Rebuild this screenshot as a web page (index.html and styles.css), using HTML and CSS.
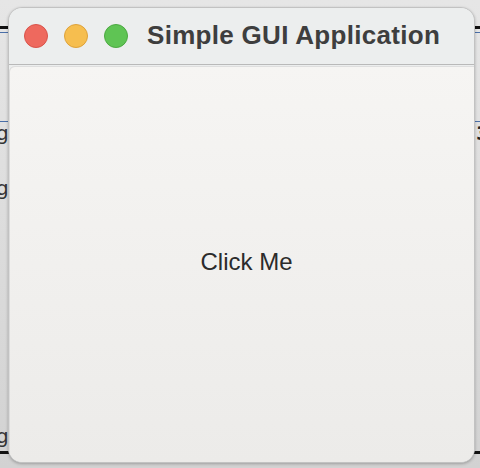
FILE: index.html
```html
<!DOCTYPE html>
<html>
<head>
<meta charset="utf-8">
<link rel="stylesheet" href="styles.css">
</head>
<body>
<div class="desktop">
  <div class="bg-line bg-line-black l"></div>
  <div class="bg-line bg-line-blue l"></div>
  <div class="bg-line bg-line-black r"></div>
  <div class="bg-line bg-line-blue r"></div>
  <div class="bg-line bg-line-blue l2"></div>
  <div class="bg-line bg-line-blue r2"></div>
  <span class="bg-glyph g1">g</span>
  <span class="bg-glyph g2">g</span>
  <span class="bg-glyph g3">g</span>
  <span class="bg-glyph g4">3</span>
  <div class="bg-line bg-line-black lb"></div>
  <div class="bg-line bg-line-black rb"></div>

  <div class="window">
    <div class="titlebar">
      <div class="lights">
        <span class="light red"></span>
        <span class="light yellow"></span>
        <span class="light green"></span>
      </div>
      <div class="title">Simple GUI Application</div>
    </div>
    <div class="content">
      <div class="button">Click Me</div>
    </div>
  </div>
</div>
</body>
</html>
```

FILE: styles.css
```css
html, body {
  margin: 0;
  padding: 0;
}
body {
  width: 480px;
  height: 468px;
  overflow: hidden;
  background: #d6d6d6;
  font-family: "Liberation Sans", Arial, sans-serif;
}
.desktop {
  position: relative;
  width: 480px;
  height: 468px;
  background: linear-gradient(#e6e6e6, #dadada 60%, #d2d2d2);
  padding-top: 7px;
  box-sizing: border-box;
}
.bg-line {
  position: absolute;
  height: 2px;
}
.bg-line-black { background: #111; height: 3px; }
.bg-line-blue { background: #4a6fa8; height: 1px; }
.bg-line.l { left: 0; width: 9px; top: 26px; }
.bg-line-blue.l { top: 32px; }
.bg-line.r { right: 0; width: 6px; top: 26px; }
.bg-line-blue.r { top: 32px; }
.bg-line.l2 { left: 0; width: 9px; top: 121px; }
.bg-line.r2 { right: 0; width: 6px; top: 121px; }
.bg-line.lb { left: 0; width: 12px; top: 451px; }
.bg-line.rb { right: 0; width: 8px; top: 451px; }
.bg-glyph {
  position: absolute;
  font-family: "DejaVu Sans", sans-serif;
  font-size: 20px;
  color: #333;
  line-height: 1;
}
.g1 { left: -4px; top: 123px; }
.g2 { left: -4px; top: 178px; }
.g3 { left: -4px; top: 426px; }
.g4 { right: -10px; top: 123px; font-weight: bold; color: #222; }

.window {
  position: relative;
  margin-left: 8px;
  width: 467px;
  height: 456px;
  box-sizing: border-box;
  border: 1px solid #c2c2c2;
  border-radius: 14px;
  background: #eceeee;
  overflow: hidden;
  box-shadow: 0 1px 3px rgba(0,0,0,0.25);
  display: flex;
  flex-direction: column;
}
.titlebar {
  height: 57px;
  flex: none;
  display: flex;
  align-items: center;
  background: #eceeee;
  border-bottom: 1px solid #b9b9b9;
  padding-left: 15px;
  box-sizing: border-box;
}
.lights {
  display: flex;
  gap: 16px;
  padding-bottom: 1px;
}
.light {
  width: 24px;
  height: 24px;
  border-radius: 50%;
  box-sizing: border-box;
}
.red { background: #ee695e; border: 1px solid #d9534a; }
.yellow { background: #f6be4f; border: 1px solid #dea23a; }
.green { background: #5fc454; border: 1px solid #4ca941; }
.title {
  margin-left: 19px;
  font-size: 26px;
  font-weight: bold;
  color: #3e3e3e;
  letter-spacing: 0.3px;
  padding-bottom: 2px;
}
.content {
  flex: 1;
  margin-top: 1px;
  background: linear-gradient(#f6f5f3, #ecebe9);
  border-top-left-radius: 6px;
  box-shadow: inset 1px 0 0 #dcdcdc, inset 0 1px 0 #dedede;
  display: flex;
  align-items: center;
  justify-content: center;
}
.button {
  font-size: 24px;
  color: #2b2b2b;
  margin-top: -4px;
  margin-left: 10px;
}
```
